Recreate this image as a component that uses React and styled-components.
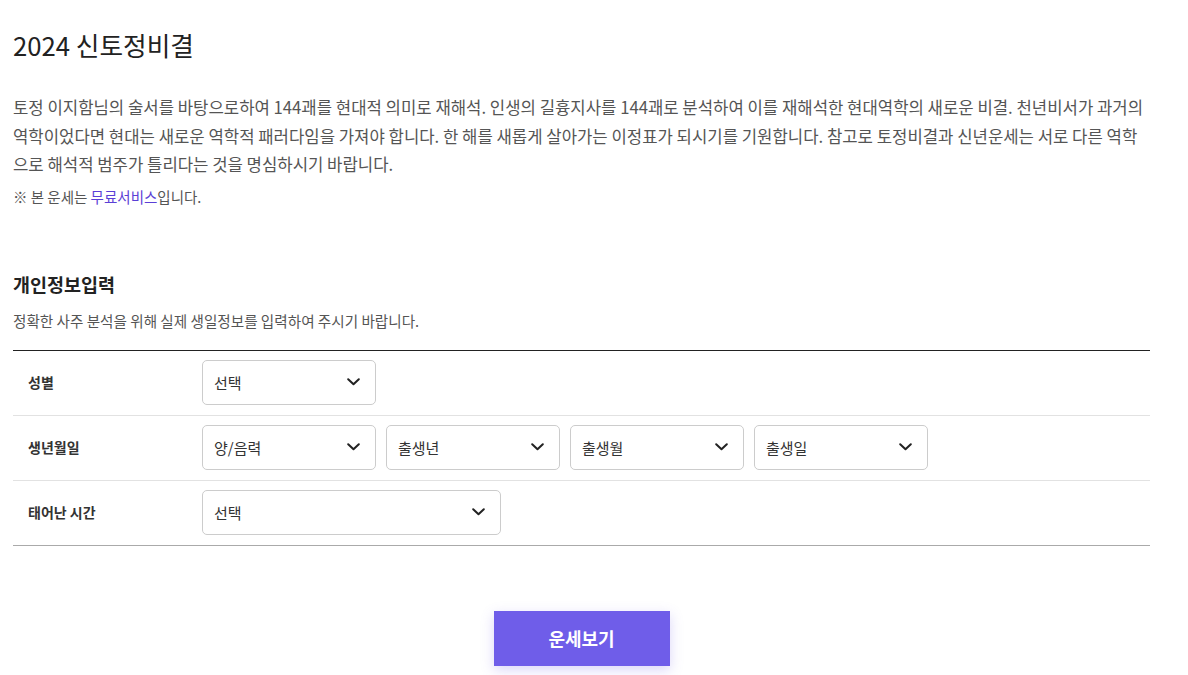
import React from "react";
import styled, { createGlobalStyle } from "styled-components";

const Global = createGlobalStyle`
  html, body { margin: 0; padding: 0; background: #fff; }
  body { font-family: "Noto Sans CJK KR", "Noto Sans", sans-serif; color: #222; }
  * { box-sizing: border-box; }
`;

const Page = styled.main`
  width: 1150px;
  padding: 27px 0 40px 13px;
`;

const Title = styled.h1`
  margin: 0;
  font-size: 25.7px;
  line-height: 36px;
  font-weight: 400;
  color: #222;
`;

const Intro = styled.p`
  margin: 30px 0 0;
  font-size: 16.7px;
  line-height: 28.5px;
  color: #555;
`;

const Note = styled.p`
  margin: 8px 0 0;
  font-size: 14.5px;
  line-height: 20px;
  color: #555;
`;

const Free = styled.span`
  color: #5b3fd6;
`;

const SectionTitle = styled.h2`
  margin: 64px 0 0;
  font-size: 18.5px;
  line-height: 26px;
  font-weight: 700;
  color: #222;
`;

const SectionDesc = styled.p`
  margin: 14px 0 0;
  font-size: 14.6px;
  line-height: 20px;
  color: #555;
`;

const Table = styled.div`
  margin-top: 19px;
  border-top: 1px solid #222;
  border-bottom: 1px solid #aaa;
`;

const Row = styled.div`
  display: flex;
  align-items: center;
  height: ${(p) => (p.$first ? "64px" : "65px")};
  padding-bottom: 1px;
  border-top: ${(p) => (p.$first ? "none" : "1px solid #e2e2e2")};
`;

const Label = styled.div`
  width: 189px;
  padding-left: 15px;
  font-size: 14px;
  font-weight: 700;
  color: #333;
`;

const Fields = styled.div`
  display: flex;
  gap: 10px;
`;

const SelectBox = styled.div`
  display: flex;
  align-items: center;
  justify-content: space-between;
  width: ${(p) => p.$w || 174}px;
  height: 45px;
  padding: 0 15px 0 11px;
  border: 1px solid #ccc;
  border-radius: 5px;
  background: #fff;
  font-size: 15px;
  color: #333;
`;

const Chevron = () => (
  <svg width="13" height="8" viewBox="0 0 13 8" fill="none">
    <polyline points="1.2,1.2 6.5,6.3 11.8,1.2" stroke="#222" strokeWidth="2" strokeLinecap="round" strokeLinejoin="round" />
  </svg>
);

const Select = ({ children, w }) => (
  <SelectBox $w={w}>
    <span>{children}</span>
    <Chevron />
  </SelectBox>
);

const Actions = styled.div`
  display: flex;
  justify-content: center;
  padding-top: 65px;
`;

const Button = styled.button`
  width: 176px;
  height: 55px;
  border: none;
  background: #6f5de9;
  color: #fff;
  font-family: inherit;
  font-size: 18px;
  font-weight: 700;
  box-shadow: 0 4px 12px rgba(111, 93, 233, 0.25);
  cursor: pointer;
`;

export default function App() {
  return (
    <>
      <Global />
      <Page>
        <Title>2024 신토정비결</Title>
        <Intro>
          토정 이지함님의 술서를 바탕으로하여 144괘를 현대적 의미로 재해석. 인생의 길흉지사를 144괘로 분석하여 이를 재해석한 현대역학의 새로운 비결. 천년비서가 과거의 역학이었다면 현대는 새로운 역학적 패러다임을 가져야 합니다. 한 해를 새롭게 살아가는 이정표가 되시기를 기원합니다. 참고로 토정비결과 신년운세는 서로 다른 역학으로 해석적 범주가 틀리다는 것을 명심하시기 바랍니다.
        </Intro>
        <Note>
          ※ 본 운세는 <Free>무료서비스</Free>입니다.
        </Note>
        <SectionTitle>개인정보입력</SectionTitle>
        <SectionDesc>정확한 사주 분석을 위해 실제 생일정보를 입력하여 주시기 바랍니다.</SectionDesc>
        <Table>
          <Row $first>
            <Label>성별</Label>
            <Fields>
              <Select>선택</Select>
            </Fields>
          </Row>
          <Row>
            <Label>생년월일</Label>
            <Fields>
              <Select>양/음력</Select>
              <Select>출생년</Select>
              <Select>출생월</Select>
              <Select>출생일</Select>
            </Fields>
          </Row>
          <Row>
            <Label>태어난 시간</Label>
            <Fields>
              <Select w={299}>선택</Select>
            </Fields>
          </Row>
        </Table>
        <Actions>
          <Button>운세보기</Button>
        </Actions>
      </Page>
    </>
  );
}
